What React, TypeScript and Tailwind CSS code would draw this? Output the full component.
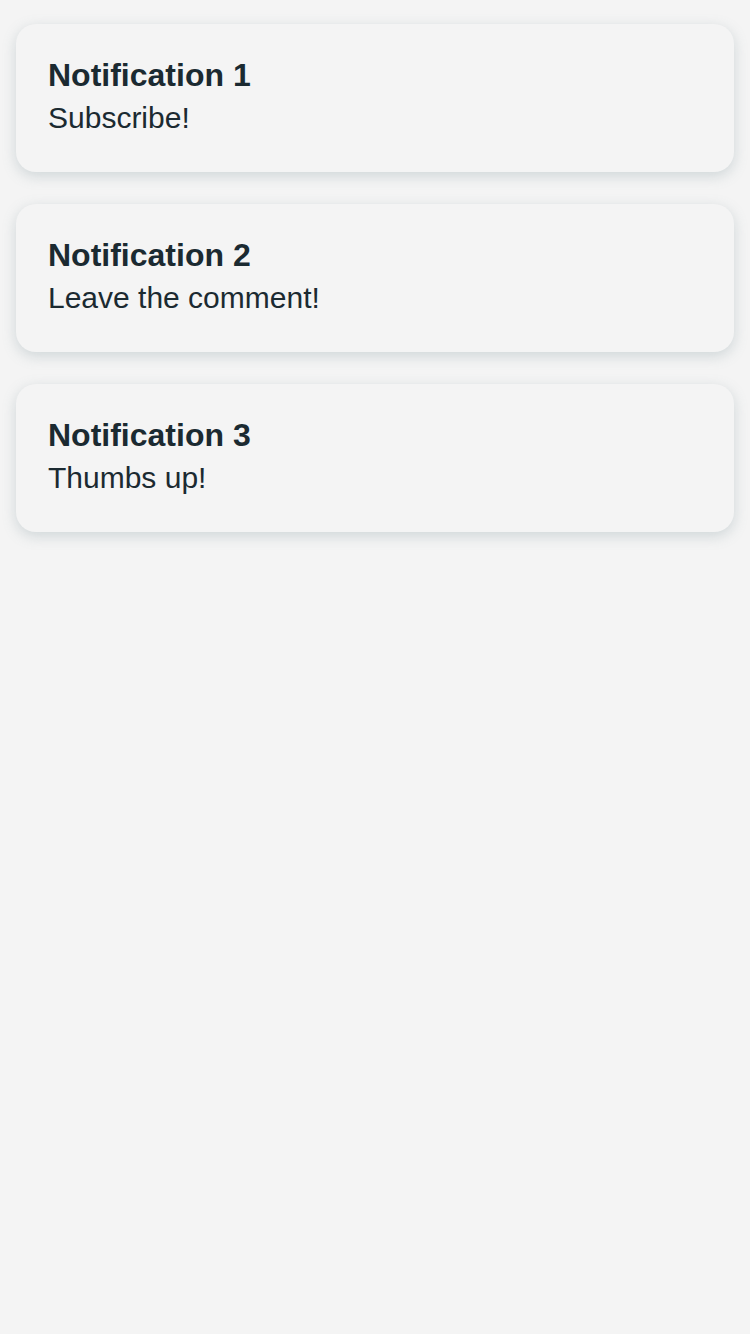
const notifications = [
  { id: 1, title: 'Notification 1', body: 'Subscribe!' },
  { id: 2, title: 'Notification 2', body: 'Leave the comment!' },
  { id: 3, title: 'Notification 3', body: 'Thumbs up!' },
]

export default function App() {
  return (
    <div
      className="min-h-[1334px] bg-[#f4f4f4] px-4 pt-6 flex flex-col gap-8 text-[#1b2a31]"
      style={{ fontFamily: '"Liberation Sans", Arial, sans-serif' }}
    >
      {notifications.map(n => (
        <div
          key={n.id}
          className="h-[148px] bg-[#f4f4f4] rounded-[20px] px-8 pt-[33px] shadow-[0_4px_14px_rgba(110,135,145,0.28)]"
        >
          <div className="text-[32px] leading-[normal] font-bold">{n.title}</div>
          <div className="text-[30px] leading-[normal] mt-[7px]">{n.body}</div>
        </div>
      ))}
    </div>
  )
}
